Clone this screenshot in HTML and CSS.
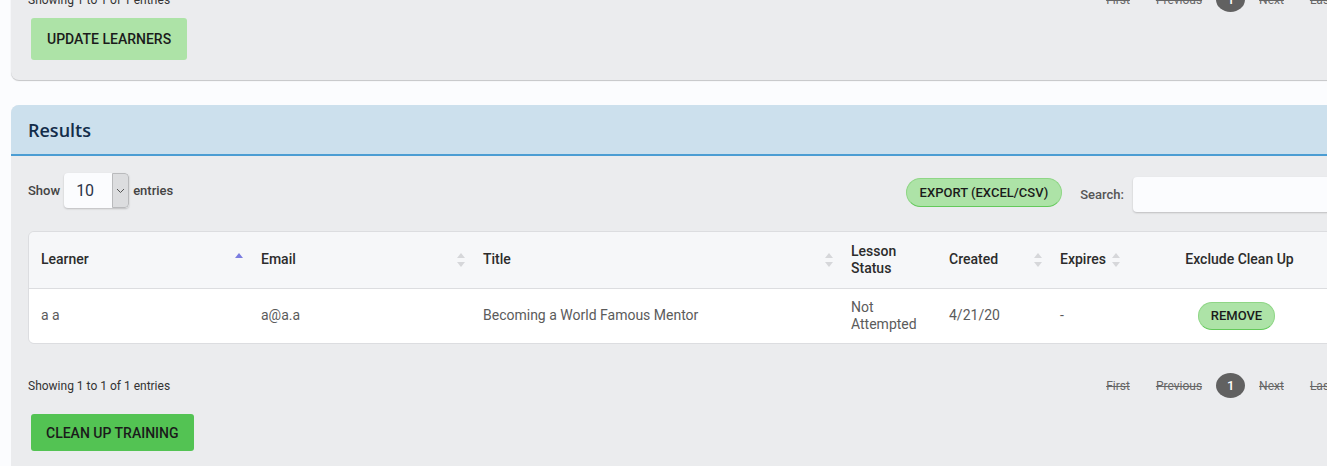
FILE: index.html
```html
<!DOCTYPE html>
<html lang="en">
<head>
  <meta charset="UTF-8">
  <meta name="viewport" content="width=device-width, initial-scale=1.0">
  <title>Training Clean Up</title>
  <link rel="stylesheet" href="styles.css">
</head>
<body>
  <div class="page">

    <section class="panel panel-top">
      <div class="table-foot">
        <div class="info">Showing 1 to 1 of 1 entries</div>
        <div class="paging">
          <a class="page-link disabled">First</a>
          <a class="page-link disabled">Previous</a>
          <a class="page-link current">1</a>
          <a class="page-link disabled">Next</a>
          <a class="page-link disabled">Last</a>
        </div>
      </div>
      <button class="btn btn-light btn-update">Update Learners</button>
    </section>

    <section class="panel panel-results">
      <header class="panel-head">
        <h2>Results</h2>
      </header>

      <div class="panel-body">
        <div class="table-tools">
          <div class="length">
            <span>Show</span>
            <div class="select">
              <span class="select-value">10</span>
              <span class="select-arrow">
                <svg width="9" height="6" viewBox="0 0 9 6"><path d="M1 1 L4.5 4.5 L8 1" fill="none" stroke="#555" stroke-width="1"/></svg>
              </span>
            </div>
            <span>entries</span>
          </div>

          <div class="tools-right">
            <button class="btn-pill btn-export">Export (Excel/CSV)</button>
            <label class="search">
              <span>Search:</span>
              <input type="text">
            </label>
          </div>
        </div>

        <div class="table-wrap">
          <table class="results-table">
            <colgroup>
              <col style="width: 220px">
              <col style="width: 222px">
              <col style="width: 368px">
              <col style="width: 98px">
              <col style="width: 111px">
              <col style="width: 78px">
              <col style="width: 221px">
            </colgroup>
            <thead>
              <tr>
                <th><div class="th-in"><span>Learner</span>
                  <svg class="sort" width="8" height="14" viewBox="0 0 8 14"><path d="M4 0 L8 5 H0Z" fill="#7b7de0"/></svg></div></th>
                <th><div class="th-in"><span>Email</span>
                  <svg class="sort" width="8" height="14" viewBox="0 0 8 14"><path d="M4 0 L8 5 H0Z" fill="#d6d7da"/><path d="M4 14 L8 9 H0Z" fill="#d6d7da"/></svg></div></th>
                <th><div class="th-in"><span>Title</span>
                  <svg class="sort" width="8" height="14" viewBox="0 0 8 14"><path d="M4 0 L8 5 H0Z" fill="#d6d7da"/><path d="M4 14 L8 9 H0Z" fill="#d6d7da"/></svg></div></th>
                <th><div class="th-in"><span>Lesson Status</span></div></th>
                <th><div class="th-in"><span>Created</span>
                  <svg class="sort" width="8" height="14" viewBox="0 0 8 14"><path d="M4 0 L8 5 H0Z" fill="#d6d7da"/><path d="M4 14 L8 9 H0Z" fill="#d6d7da"/></svg></div></th>
                <th><div class="th-in"><span>Expires</span>
                  <svg class="sort" width="8" height="14" viewBox="0 0 8 14"><path d="M4 0 L8 5 H0Z" fill="#d6d7da"/><path d="M4 14 L8 9 H0Z" fill="#d6d7da"/></svg></div></th>
                <th class="center">Exclude Clean Up</th>
              </tr>
            </thead>
            <tbody>
              <tr>
                <td>a a</td>
                <td>a@a.a</td>
                <td>Becoming a World Famous Mentor</td>
                <td>Not Attempted</td>
                <td>4/21/20</td>
                <td>-</td>
                <td class="center"><button class="btn-pill btn-remove">Remove</button></td>
              </tr>
            </tbody>
          </table>
        </div>

        <div class="table-foot foot-results">
          <div class="info">Showing 1 to 1 of 1 entries</div>
          <div class="paging">
            <a class="page-link disabled">First</a>
            <a class="page-link disabled">Previous</a>
            <a class="page-link current">1</a>
            <a class="page-link disabled">Next</a>
            <a class="page-link disabled">Last</a>
          </div>
        </div>

        <button class="btn btn-green">Clean Up Training</button>
      </div>
    </section>

  </div>
</body>
</html>
```

FILE: styles.css
```css
* {
  margin: 0;
  padding: 0;
  box-sizing: border-box;
}

html, body {
  height: 100%;
  overflow: hidden;
}

body {
  background-color: #fbfcfe;
  color: #333;
  font-family: Roboto, "Liberation Sans", sans-serif;
}

.page {
  width: 1363px;
  padding-left: 11px;
}

/* panels */
.panel {
  background-color: #ebecee;
  border-radius: 8px;
  padding: 0 17px;
}

.panel-top {
  margin-top: -13px;
  padding-bottom: 20px;
  box-shadow: 0 1px 1px rgba(0, 0, 0, 0.22);
}

.panel-results {
  margin-top: 25px;
  padding: 0 0 30px;
  border-radius: 8px 8px 0 0;
}

.panel-head {
  background-color: #cce0ed;
  border-radius: 8px 8px 0 0;
  border-bottom: 2px solid #4b9dd3;
  height: 51px;
  padding: 0 17px;
  display: flex;
  align-items: center;
}

.panel-head h2 {
  font-family: "Open Sans", Roboto, sans-serif;
  font-size: 18px;
  font-weight: 600;
  color: #132d4a;
  margin-top: 1px;
}

.panel-body {
  padding: 17px 17px 0;
}

/* buttons */
.btn {
  display: block;
  border: none;
  border-radius: 3px;
  font-family: Roboto, sans-serif;
  font-size: 14px;
  font-weight: 500;
  text-transform: uppercase;
  color: #1b1b1b;
  padding: 0 16px;
  margin-left: 3px;
  cursor: pointer;
}

.btn-light {
  background-color: #ade3a7;
}

.btn-update {
  height: 42px;
  margin-top: 6px;
}

.btn-green {
  background-color: #53c353;
  height: 37px;
  margin-top: 16px;
  padding: 0 15px;
}

.btn-pill {
  border: 1px solid #8fd686;
  border-bottom-color: #63c95a;
  border-radius: 16px;
  background-color: #ade3a7;
  font-family: Roboto, sans-serif;
  font-weight: 500;
  text-transform: uppercase;
  color: #1b1b1b;
  cursor: pointer;
}

.btn-export {
  height: 29px;
  padding: 0 13px;
  font-size: 13px;
  margin-top: -4px;
}

.btn-remove {
  height: 28px;
  padding: 0 12px;
  font-size: 13px;
}

/* table tools */
.table-tools {
  display: flex;
  justify-content: space-between;
  align-items: flex-start;
}

.length {
  display: flex;
  align-items: center;
  gap: 4px;
  font-size: 13px;
  font-weight: 500;
  color: #444;
}

.select {
  display: flex;
  height: 35px;
  width: 65px;
  background-color: #fbfcfe;
  border-radius: 4px;
  box-shadow: 0 1px 2px rgba(0, 0, 0, 0.2);
  overflow: hidden;
}

.select-value {
  flex: 1;
  display: flex;
  align-items: center;
  padding-left: 12px;
  font-size: 16px;
  font-weight: 400;
  color: #2b3448;
}

.select-arrow {
  width: 17px;
  display: flex;
  align-items: center;
  justify-content: center;
  background-color: #dcdddf;
  border: 1px solid #b9babc;
  border-radius: 0 4px 4px 0;
}

.tools-right {
  display: flex;
  align-items: center;
  gap: 18px;
  margin-top: 4px;
}

.search {
  display: flex;
  align-items: center;
  gap: 9px;
  font-size: 13px;
  font-weight: 500;
  color: #555;
}

.search input {
  width: 213px;
  height: 35px;
  border: none;
  border-radius: 4px;
  background-color: #fbfcfe;
  box-shadow: 0 1px 2px rgba(0, 0, 0, 0.2);
}

/* table */
.table-wrap {
  margin-top: 19px;
  border: 1px solid #dcdde0;
  border-radius: 6px;
  overflow: hidden;
}

.results-table {
  width: 100%;
  table-layout: fixed;
  border-collapse: collapse;
  font-size: 14px;
}

.results-table th {
  height: 56px;
  background-color: #f6f7f9;
  border-bottom: 1px solid #dcdde0;
  text-align: left;
  font-weight: 500;
  color: #2c2c2c;
  padding: 0 6px 0 12px;
  line-height: 17px;
}

.th-in {
  display: flex;
  align-items: center;
  justify-content: space-between;
}

.sort {
  flex-shrink: 0;
}

.results-table td {
  height: 55px;
  background-color: #fff;
  color: #5b5b5b;
  padding: 0 12px;
  line-height: 17px;
}

.results-table .center {
  text-align: center;
}

/* footer row with info + paging */
.table-foot {
  display: flex;
  justify-content: space-between;
  align-items: center;
  height: 25px;
}

.foot-results {
  margin-top: 29px;
}

.info {
  font-size: 12px;
  color: #333;
}

.paging {
  display: flex;
  align-items: center;
}

.page-link {
  font-size: 12px;
  color: #666;
  padding: 0 13px;
}

.page-link.disabled {
  text-decoration: line-through;
}

.page-link.current {
  width: 29px;
  height: 25px;
  padding: 0;
  margin: 0 1px;
  border-radius: 50%;
  background-color: #616161;
  color: #fff;
  font-size: 13px;
  font-weight: 500;
  display: flex;
  align-items: center;
  justify-content: center;
}
```
